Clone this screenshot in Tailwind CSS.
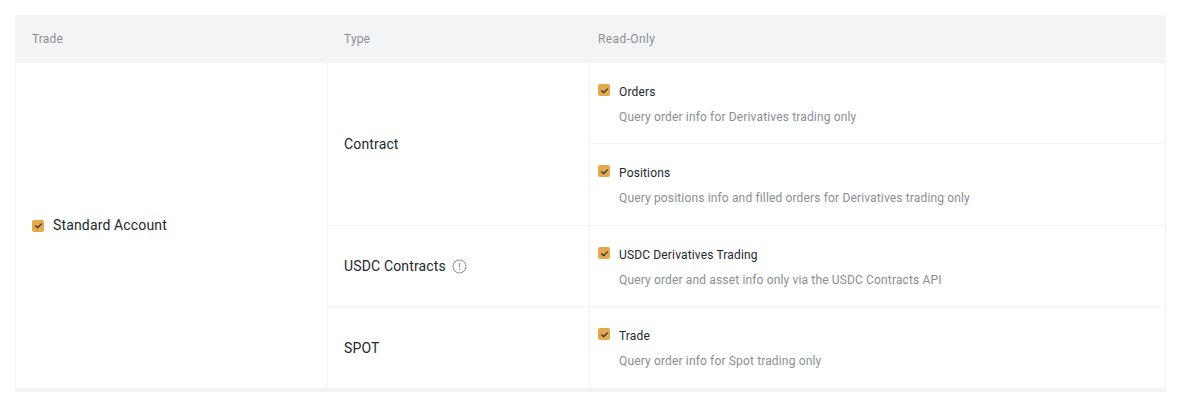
<!DOCTYPE html>
<html lang="en">
<head>
    <meta charset="UTF-8">
    <title>API Permissions</title>
    <script src="https://cdn.jsdelivr.net/npm/@tailwindcss/browser@4"></script>
</head>
<body class="bg-white font-['Roboto',sans-serif] tracking-[0.15px] w-[1184px] h-[406px] overflow-hidden">
    <div class="ml-[15px] mt-[15px] w-[1151px]">
        <!-- header -->
        <div class="flex h-[48px] items-center bg-[#f3f4f6] text-[12px] text-[#8b8e94]">
            <div class="w-[313px] pl-[17px]">Trade</div>
            <div class="w-[262px] pl-[16px]">Type</div>
            <div class="pl-[8px] tracking-[0.4px]">Read-Only</div>
        </div>

        <div class="flex h-[325px] border-l border-r border-[#f3f4f6] text-[14px] text-[#23272e]">
            <div class="w-[312px] flex items-center gap-[9px] pl-[16px] border-r border-[#f3f4f6]">
                <span class="w-[12px] h-[12px] rounded-[2px] bg-[#e4a94b] flex items-center justify-center">
                    <svg class="w-[9px] h-[9px]" viewBox="0 0 10 10" fill="none" stroke="#1e2329" stroke-width="1.2"><path d="M1.5 5l2.5 2.5L8.5 3"/></svg>
                </span>
                <span>Standard Account</span>
            </div>

            <div class="flex-1 flex flex-col">
                <!-- Contract group has two permissions -->
                <div class="flex h-[163px] border-b border-[#f3f4f6]">
                    <div class="w-[262px] flex items-center pl-[16px] border-r border-[#f3f4f6]">Contract</div>
                    <div class="flex-1 flex flex-col">
                        <div class="h-[81px] border-b border-[#f3f4f6] pl-[8px] pt-[20px]">
                            <div class="flex items-start gap-[9px] h-[16px] text-[12px]">
                                <span class="mt-[1px] w-[12px] h-[12px] rounded-[2px] bg-[#e4a94b] flex items-center justify-center">
                                    <svg class="w-[9px] h-[9px]" viewBox="0 0 10 10" fill="none" stroke="#1e2329" stroke-width="1.2"><path d="M1.5 5l2.5 2.5L8.5 3"/></svg>
                                </span>
                                <span class="leading-[16px] mt-[1px]">Orders</span>
                            </div>
                            <p class="ml-[21px] mt-[10px] text-[12px] leading-[16px] text-[#8b8e94]">Query order info for Derivatives trading only</p>
                        </div>
                        <div class="flex-1 pl-[8px] pt-[20px]">
                            <div class="flex items-start gap-[9px] h-[16px] text-[12px]">
                                <span class="mt-[1px] w-[12px] h-[12px] rounded-[2px] bg-[#e4a94b] flex items-center justify-center">
                                    <svg class="w-[9px] h-[9px]" viewBox="0 0 10 10" fill="none" stroke="#1e2329" stroke-width="1.2"><path d="M1.5 5l2.5 2.5L8.5 3"/></svg>
                                </span>
                                <span class="leading-[16px] mt-[1px]">Positions</span>
                            </div>
                            <p class="ml-[21px] mt-[10px] text-[12px] leading-[16px] text-[#8b8e94]">Query positions info and filled orders for Derivatives trading only</p>
                        </div>
                    </div>
                </div>

                <div class="flex h-[81px] border-b border-[#f3f4f6]">
                    <div class="w-[262px] flex items-center gap-[6px] pl-[16px] border-r border-[#f3f4f6]">
                        <span>USDC Contracts</span>
                        <svg class="w-[15px] h-[15px]" viewBox="0 0 15 15" fill="none" stroke="#8b8e94"><circle cx="7.5" cy="7.5" r="6.5"/><path d="M7.5 4v4.5M7.5 10v1.2"/></svg>
                    </div>
                    <div class="flex-1 pl-[8px] pt-[20px]">
                        <div class="flex items-start gap-[9px] h-[16px] text-[12px]">
                            <span class="mt-[1px] w-[12px] h-[12px] rounded-[2px] bg-[#e4a94b] flex items-center justify-center">
                                <svg class="w-[9px] h-[9px]" viewBox="0 0 10 10" fill="none" stroke="#1e2329" stroke-width="1.2"><path d="M1.5 5l2.5 2.5L8.5 3"/></svg>
                            </span>
                            <span class="leading-[16px] mt-[1px]">USDC Derivatives Trading</span>
                        </div>
                        <p class="ml-[21px] mt-[10px] text-[12px] leading-[16px] text-[#8b8e94]">Query order and asset info only via the USDC Contracts API</p>
                    </div>
                </div>

                <div class="flex flex-1">
                    <div class="w-[262px] flex items-center pl-[16px] border-r border-[#f3f4f6]"><span class="mt-[2px]">SPOT</span></div>
                    <div class="flex-1 pl-[8px] pt-[20px]">
                        <div class="flex items-start gap-[9px] h-[16px] text-[12px]">
                            <span class="mt-[1px] w-[12px] h-[12px] rounded-[2px] bg-[#e4a94b] flex items-center justify-center">
                                <svg class="w-[9px] h-[9px]" viewBox="0 0 10 10" fill="none" stroke="#1e2329" stroke-width="1.2"><path d="M1.5 5l2.5 2.5L8.5 3"/></svg>
                            </span>
                            <span class="leading-[16px] mt-[1px]">Trade</span>
                        </div>
                        <p class="ml-[21px] mt-[10px] text-[12px] leading-[16px] text-[#8b8e94]">Query order info for Spot trading only</p>
                    </div>
                </div>
            </div>
        </div>
        <div class="h-[4px] bg-[#f3f4f6]"></div>
    </div>
</body>
</html>
